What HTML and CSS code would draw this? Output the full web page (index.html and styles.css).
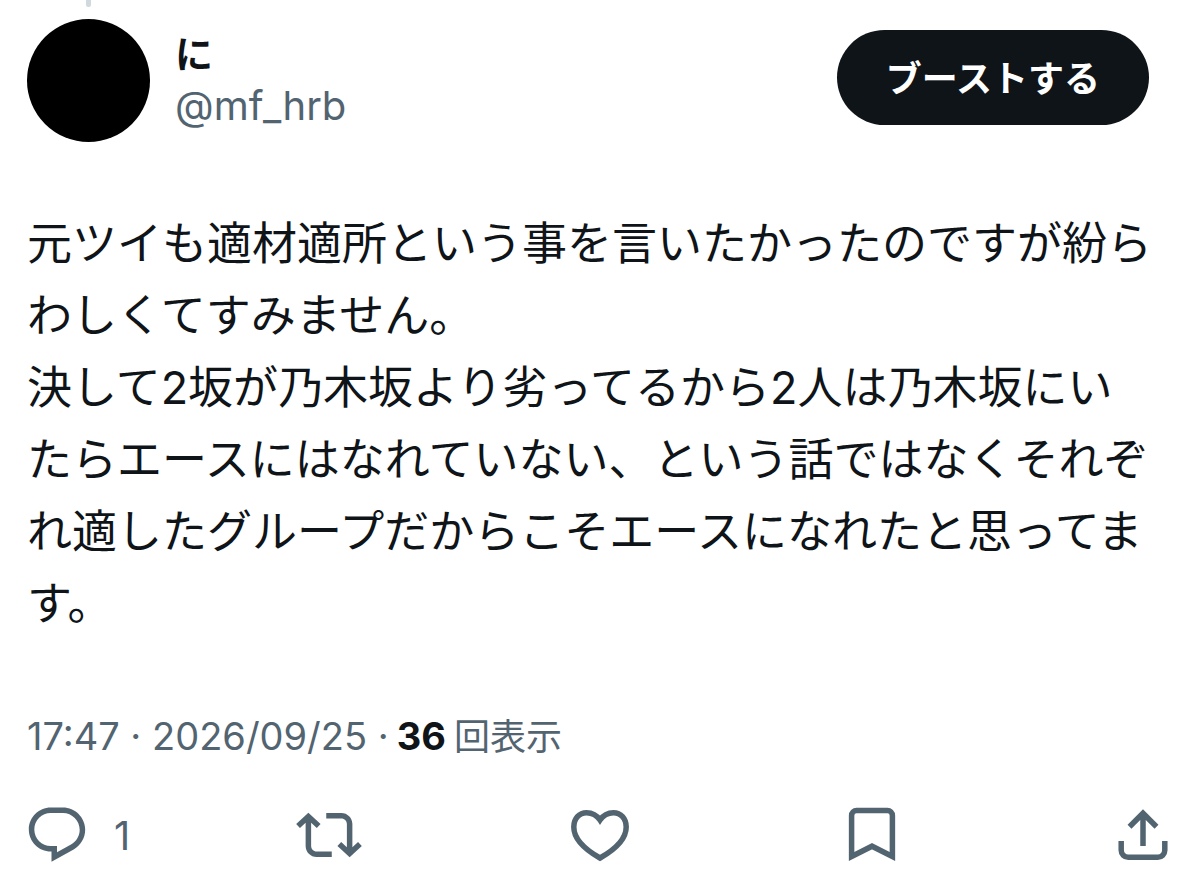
FILE: index.html
```html
<!DOCTYPE html>
<html lang="ja">
  <head>
    <meta charset="UTF-8" />
    <meta name="viewport" content="width=device-width, initial-scale=1.0" />
    <title>に (@mf_hrb)</title>
    <link rel="stylesheet" href="styles.css">
  </head>
  <body>
    <article class="post">
      <div class="thread-line"></div>

      <header class="post-header">
        <div class="avatar"></div>
        <div class="user">
          <div class="name">に</div>
          <div class="handle">@mf_hrb</div>
        </div>
        <button class="boost" type="button">ブーストする</button>
      </header>

      <div class="post-text">
        <p>元ツイも適材適所という事を言いたかったのですが紛らわしくてすみません。</p>
        <p>決して2坂が乃木坂より劣ってるから2人は乃木坂にいたらエースにはなれていない、という話ではなくそれぞれ適したグループだからこそエースになれたと思ってます。</p>
      </div>

      <div class="meta">
        <span>17:47 · 2026/09/25 ·</span>
        <strong>36</strong>
        <span class="views">回表示</span>
      </div>

      <div class="actions">
        <button class="action" type="button" aria-label="返信">
          <svg viewBox="0 0 24 24">
            <path fill="currentColor" d="M1.751 10c0-4.42 3.584-8 8.005-8h4.366c4.49 0 8.129 3.64 8.129 8.13 0 2.96-1.607 5.68-4.196 7.11l-8.054 4.46v-3.69h-.067c-4.49.1-8.183-3.51-8.183-8.01zm8.005-6c-3.317 0-6.005 2.69-6.005 6 0 3.37 2.77 6.08 6.138 6.01l.351-.01h1.761v2.3l5.087-2.81c1.951-1.08 3.163-3.13 3.163-5.36 0-3.39-2.744-6.13-6.129-6.13H9.756z" />
          </svg>
          <span class="count">1</span>
        </button>
        <button class="action" type="button" aria-label="リポスト">
          <svg viewBox="0 0 24 24">
            <path fill="currentColor" d="M4.5 3.88l4.432 4.14-1.364 1.46L5.5 7.55V16c0 1.1.896 2 2 2H13v2H7.5c-2.209 0-4-1.79-4-4V7.55L1.432 9.48.068 8.02 4.5 3.88zM16.5 6H11V4h5.5c2.209 0 4 1.79 4 4v8.45l2.068-1.93 1.364 1.46-4.432 4.14-4.432-4.14 1.364-1.46 2.068 1.93V8c0-1.1-.896-2-2-2z" />
          </svg>
        </button>
        <button class="action" type="button" aria-label="いいね">
          <svg class="line-icon" viewBox="0 0 66 66">
            <path d="M33 18C30 13.5 25 10.7 19.5 10.7C12.3 10.7 6.8 16.6 6.8 25C6.8 37 17 47 33 56C49 47 59.2 37 59.2 25C59.2 16.6 53.7 10.7 46.5 10.7C41 10.7 36 13.5 33 18z" />
          </svg>
        </button>
        <button class="action" type="button" aria-label="ブックマーク">
          <svg class="line-icon" viewBox="0 0 66 66">
            <path d="M12.6 54.5V13.4a5 5 0 0 1 5-5h30.8a5 5 0 0 1 5 5v41.1L33 44.2z" />
          </svg>
        </button>
        <button class="action" type="button" aria-label="共有">
          <svg class="line-icon" viewBox="0 0 66 66">
            <path d="M33 44V11M19.500 24.7L33 11.2L46.500 24.7M11.2 39v9.300a7 7 0 0 0 7 7h29.600a7 7 0 0 0 7-7V39" />
          </svg>
        </button>
      </div>
    </article>
  </body>
</html>
```
FILE: styles.css
```css
* {
  margin: 0;
  padding: 0;
  box-sizing: border-box;
}

body {
  background-color: #fff;
  color: #0f1419;
  font-family: Inter, "Noto Sans CJK JP", sans-serif;
}

.post {
  padding: 0 24px;
}

.thread-line {
  width: 5px;
  height: 7px;
  margin-left: 62px;
  background-color: #cfd9de;
  border-radius: 0 0 3px 3px;
}

.post-header {
  display: flex;
  align-items: flex-start;
  padding: 12px 27px 0 3px;
}

.avatar {
  width: 123px;
  height: 123px;
  flex-shrink: 0;
  background-color: #000;
  border-radius: 50%;
}

.user {
  flex: 1;
  margin-left: 25px;
  padding-top: 9px;
}

.name {
  font-size: 38px;
  font-weight: 700;
  line-height: 52px;
}

.handle {
  font-size: 40px;
  line-height: 52px;
  color: #536471;
}

.boost {
  height: 95px;
  margin-top: 11px;
  padding: 0 49px 4px;
  border: none;
  border-radius: 48px;
  background-color: #0f1419;
  color: #fff;
  font-family: inherit;
  font-size: 36px;
  font-weight: 700;
  cursor: pointer;
}

.post-text {
  margin-top: 66px;
  padding: 0 21px 0 3px;
  font-size: 45px;
  line-height: 72px;
}

.meta {
  display: flex;
  align-items: baseline;
  gap: 8px;
  margin-top: 68px;
  padding-left: 3px;
  font-size: 38px;
  line-height: 56px;
  color: #536471;
}

.meta strong {
  color: #0f1419;
}

.views {
  font-size: 36px;
}

.actions {
  display: flex;
  justify-content: space-between;
  margin-top: 37px;
}

.action {
  display: flex;
  align-items: center;
  width: 66px;
  height: 66px;
  border: none;
  background: none;
  color: #536471;
  font-family: inherit;
  cursor: pointer;
}

.action svg {
  width: 66px;
  height: 66px;
  flex-shrink: 0;
}

.line-icon {
  fill: none;
  stroke: currentColor;
  stroke-width: 5.5;
}

.count {
  margin-left: 24px;
  font-size: 40px;
}
```
